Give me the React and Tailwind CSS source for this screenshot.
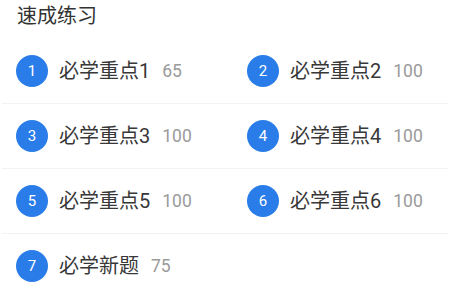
const items = [
  { n: 1, name: "必学重点1", score: 65 },
  { n: 2, name: "必学重点2", score: 100 },
  { n: 3, name: "必学重点3", score: 100 },
  { n: 4, name: "必学重点4", score: 100 },
  { n: 5, name: "必学重点5", score: 100 },
  { n: 6, name: "必学重点6", score: 100 },
  { n: 7, name: "必学新题", score: 75 },
];

function Item({ item }) {
  return (
    <div className="flex items-center h-full">
      <div className="w-8 h-8 rounded-full bg-[#2a7de8] text-white text-[15px] flex items-center justify-center shrink-0">
        {item.n}
      </div>
      <span className="ml-[11px] text-[20px] text-[#383838]">{item.name}</span>
      <span className="ml-[12px] text-[17.5px] text-[#9a9a9a]">{item.score}</span>
    </div>
  );
}

export default function App() {
  const rows = [];
  for (let i = 0; i < items.length; i += 2) rows.push(items.slice(i, i + 2));

  return (
    <div className="w-[450px] h-[284px] bg-white overflow-hidden font-['Roboto','Noto_Sans_CJK_SC',sans-serif]">
      <div className="h-[39px] pl-[17px] pt-[1px] text-[20px] text-[#333] leading-[30px]">速成练习</div>
      {rows.map((row, i) => (
        <div key={i} className={i < rows.length - 1 ? "mx-[2px] border-b border-[#f3f3f3]" : "mx-[2px]"}>
          <div className="grid grid-cols-[231px_1fr] pl-[14px] h-[64px]">
            {row.map((item) => (
              <Item key={item.n} item={item} />
            ))}
          </div>
        </div>
      ))}
    </div>
  );
}
